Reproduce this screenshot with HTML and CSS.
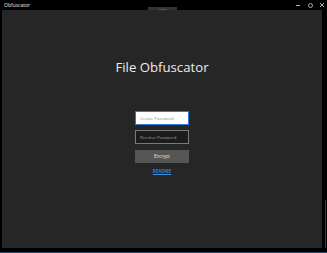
FILE: index.html
```html
<!DOCTYPE html>
<html>
<head>
<meta charset="utf-8">
<link rel="stylesheet" href="styles.css">
</head>
<body>
<div class="window">
  <div class="titlebar">
    <span class="wtitle">Obfuscator</span>
    <div class="controls">
      <span class="ctl min"></span>
      <span class="ctl max"></span>
      <span class="ctl close">
        <svg width="4" height="4" viewBox="0 0 4 4"><path d="M0 0L4 4M4 0L0 4" stroke="#ddd" stroke-width="0.8"/></svg>
      </span>
    </div>
  </div>
  <div class="body-row">
    <div class="frame">
      <div class="tab"><span class="tabline"></span></div>
      <h1 class="heading">File Obfuscator</h1>
      <div class="form">
        <div class="field active">Create Password</div>
        <div class="field">Reenter Password</div>
        <div class="btn">Encrypt</div>
        <a class="link" href="#">README</a>
      </div>
    </div>
    <div class="rstrip"><span class="rblue"></span></div>
  </div>
  <div class="bstrip"></div>
</div>
</body>
</html>
```
FILE: styles.css
```css
html, body { margin: 0; padding: 0; background: #000; }
.window { width: 327px; height: 253px; background: #000; display: flex; flex-direction: column; font-family: "Open Sans", "Noto Sans", sans-serif; overflow: hidden; }
.titlebar { height: 10px; display: flex; align-items: center; justify-content: space-between; padding-left: 4px; }
.wtitle { color: #e8e8e8; font-size: 5px; line-height: 10px; }
.controls { display: flex; align-items: center; height: 10px; }
.ctl { width: 13px; height: 10px; display: flex; align-items: center; justify-content: center; }
.min::before { content: ""; width: 4px; height: 1px; background: #bbb; }
.max::before { content: ""; width: 3px; height: 3px; border: 1px solid #aaa; border-radius: 50%; }
.close { width: 10px; }
.body-row { display: flex; height: 238px; }
.frame { position: relative; margin-left: 2px; width: 320px; background: #262626; display: flex; flex-direction: column; align-items: center; }
.tab { position: absolute; left: 146px; top: -3px; width: 29px; height: 3px; background: #333; display: flex; justify-content: center; align-items: flex-end; }
.tabline { width: 8px; height: 1px; background: #555; }
.rstrip { position: relative; flex: 1; }
.rblue { position: absolute; right: 1px; top: 190px; bottom: 0; width: 1px; background: #1c4a6e; }
.bstrip { flex: 1; border-bottom: 1px solid #1c4a6e; }
.heading { margin: 47px 0 0 0; font-weight: 400; font-size: 13.2px; line-height: 20px; color: #ececec; }
.form { margin-top: 34px; display: flex; flex-direction: column; align-items: center; width: 54px; }
.field { box-sizing: border-box; width: 54px; height: 14px; border: 1px solid #7a7a7a; background: #1c1c1c; color: #a0a0a0; font-size: 4.3px; line-height: 12px; padding-left: 4px; margin-bottom: 5px; }
.field.active { background: #fff; border-color: #2a78d6; color: #8a8a8a; }
.btn { box-sizing: border-box; width: 54px; height: 13px; background: #555; color: #e8e8e8; font-size: 4.5px; line-height: 13px; text-align: center; margin-top: 1px; }
.link { margin-top: 5px; color: #3d8fe0; font-size: 4.5px; font-weight: 600; line-height: 6px; text-decoration: underline; }
```
